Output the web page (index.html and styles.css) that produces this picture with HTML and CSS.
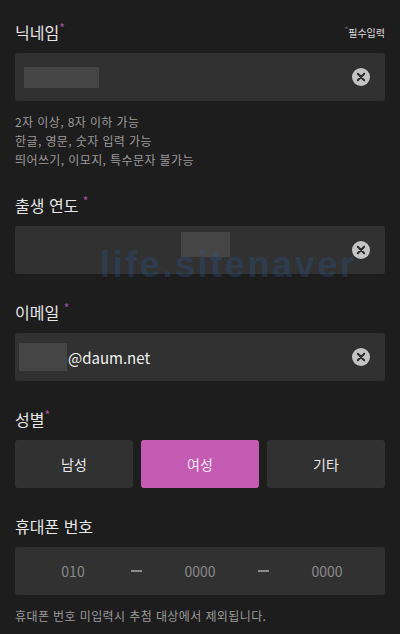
FILE: index.html
```html
<!DOCTYPE html>
<html lang="ko">
<head>
  <meta charset="UTF-8" />
  <meta name="viewport" content="width=device-width, initial-scale=1.0"/>
  <title>회원정보 입력</title>
  <link rel="stylesheet" href="styles.css">
</head>
<body>

  <div class="form">

    <div class="label-row">
      <label class="label">닉네임<span class="star">*</span></label>
      <span class="required-note"><span class="star">*</span>필수입력</span>
    </div>
    <div class="field">
      <span class="masked masked-nick"></span>
      <button class="clear" title="지우기">
        <svg width="18" height="18" viewBox="0 0 18 18"><circle cx="9" cy="9" r="9" fill="#c4c4c4"/><path d="M5.8 5.8 L12.2 12.2 M12.2 5.8 L5.8 12.2" stroke="#2b2b2b" stroke-width="2" stroke-linecap="round"/></svg>
      </button>
    </div>
    <div class="help">
      <p>2자 이상, 8자 이하 가능</p>
      <p>한글, 영문, 숫자 입력 가능</p>
      <p>띄어쓰기, 이모지, 특수문자 불가능</p>
    </div>

    <div class="label-row">
      <label class="label">출생 연도 <span class="star">*</span></label>
    </div>
    <div class="field">
      <span class="masked masked-year"></span>
      <button class="clear" title="지우기">
        <svg width="18" height="18" viewBox="0 0 18 18"><circle cx="9" cy="9" r="9" fill="#c4c4c4"/><path d="M5.8 5.8 L12.2 12.2 M12.2 5.8 L5.8 12.2" stroke="#2b2b2b" stroke-width="2" stroke-linecap="round"/></svg>
      </button>
      <div class="watermark">life.sitenaver</div>
    </div>

    <div class="label-row">
      <label class="label">이메일 <span class="star">*</span></label>
    </div>
    <div class="field field-email">
      <span class="masked masked-mail"></span>
      <span class="value">@daum.net</span>
      <button class="clear" title="지우기">
        <svg width="18" height="18" viewBox="0 0 18 18"><circle cx="9" cy="9" r="9" fill="#c4c4c4"/><path d="M5.8 5.8 L12.2 12.2 M12.2 5.8 L5.8 12.2" stroke="#2b2b2b" stroke-width="2" stroke-linecap="round"/></svg>
      </button>
    </div>

    <div class="label-row">
      <label class="label">성별<span class="star">*</span></label>
    </div>
    <div class="gender">
      <button class="gender-btn">남성</button>
      <button class="gender-btn active">여성</button>
      <button class="gender-btn">기타</button>
    </div>

    <div class="label-row">
      <label class="label">휴대폰 번호</label>
    </div>
    <div class="field phone">
      <span class="phone-part">010</span>
      <span class="dash"></span>
      <span class="phone-part">0000</span>
      <span class="dash"></span>
      <span class="phone-part">0000</span>
    </div>
    <p class="foot">휴대폰 번호 미입력시 추첨 대상에서 제외됩니다.</p>

  </div>

</body>
</html>
```

FILE: styles.css
```css
* {
  margin: 0;
  padding: 0;
  box-sizing: border-box;
}

body {
  font-family: "Noto Sans CJK KR", "Noto Sans", sans-serif;
  background-color: #1e1d1e;
  color: #e6e6e6;
}

.form {
  padding: 21px 15px 0 15px;
}

.label-row {
  display: flex;
  justify-content: space-between;
  align-items: center;
  height: 22px;
  margin-bottom: 10px;
}

.label {
  font-size: 16px;
  line-height: 22px;
  color: #e8e8e8;
}

.star {
  color: #a0579a;
  font-size: 12px;
  vertical-align: top;
  line-height: 14px;
}

.required-note {
  font-size: 10px;
  color: #dcdcdc;
}

.required-note .star {
  font-size: 8px;
  line-height: 10px;
}

.field {
  position: relative;
  display: flex;
  align-items: center;
  height: 48px;
  background: #313131;
  border-radius: 3px;
  padding: 0 15px 0 9px;
  margin-bottom: 27px;
}

.masked {
  display: block;
  background: #454545;
}

.masked-nick {
  width: 75px;
  height: 21px;
}

.masked-year {
  width: 49px;
  height: 25px;
  margin-left: 157px;
  margin-top: -12px;
}

.field-email {
  padding-left: 4px;
}

.masked-mail {
  width: 48px;
  height: 28px;
}

.value {
  font-size: 15px;
  color: #f0f0f0;
  margin-left: 1px;
}

.clear {
  margin-left: auto;
  display: flex;
  background: none;
  border: none;
  cursor: pointer;
}

.help {
  margin-top: -16px;
  margin-bottom: 25px;
}

.help p {
  font-size: 12px;
  line-height: 19px;
  letter-spacing: 0.4px;
  color: #9a9a9a;
}

.watermark {
  position: absolute;
  left: 85px;
  top: 18px;
  font-family: "Liberation Sans", sans-serif;
  font-weight: bold;
  font-size: 36px;
  letter-spacing: 2.6px;
  color: rgba(40, 90, 150, 0.3);
  pointer-events: none;
}

.gender {
  display: flex;
  gap: 8px;
  margin-bottom: 27px;
}

.gender-btn {
  flex: 1;
  height: 48px;
  background: #313131;
  border: none;
  border-radius: 3px;
  color: #e8e8e8;
  font-family: inherit;
  font-size: 14px;
  cursor: pointer;
}

.gender-btn.active {
  background: #c35bb3;
  color: #f6e6f3;
}

.phone {
  display: grid;
  grid-template-columns: repeat(5, 63.5px);
  justify-content: center;
  justify-items: center;
  padding: 0;
  margin-bottom: 11px;
}

.phone-part {
  font-size: 14px;
  color: #8a8a8a;
}

.dash {
  width: 11px;
  height: 2px;
  background: #8a8a8a;
}

.foot {
  font-size: 12px;
  line-height: 19px;
  letter-spacing: 0.4px;
  color: #9a9a9a;
}
```
